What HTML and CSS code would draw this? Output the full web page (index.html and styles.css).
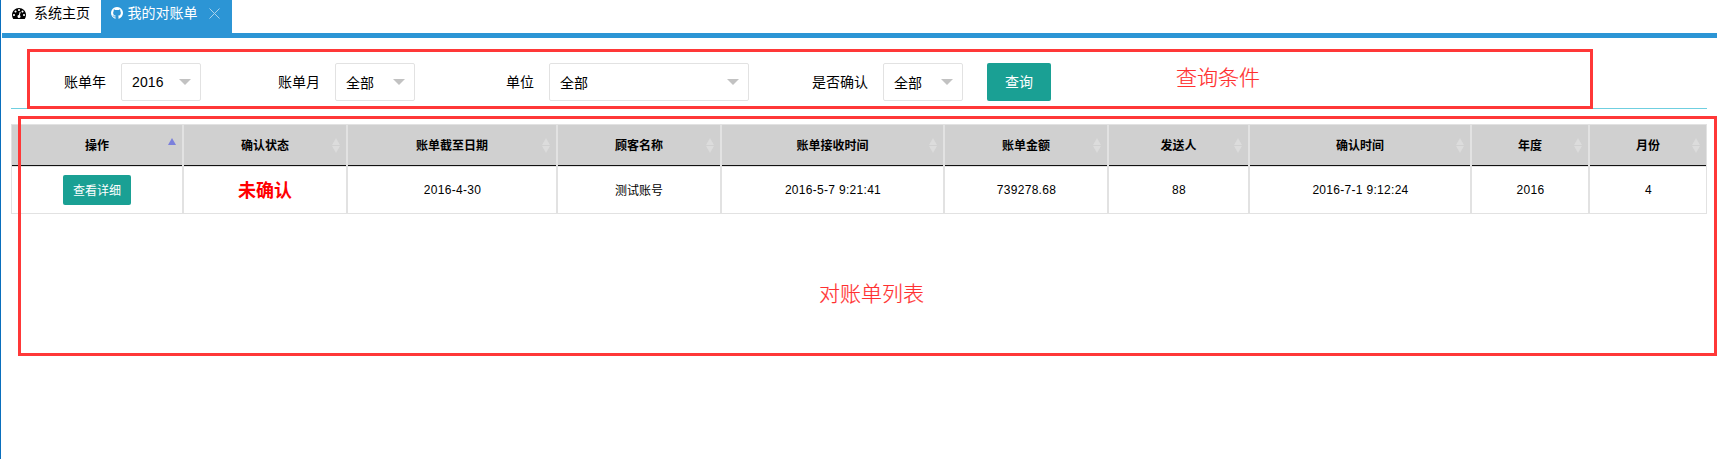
FILE: index.html
```html
<!DOCTYPE html>
<html lang="zh-CN">
<head>
<meta charset="utf-8">
<title>我的对账单</title>
<link rel="stylesheet" href="styles.css">
</head>
<body>
<div class="page">
  <nav class="tabs">
    <div class="tab">
      <svg class="icon-gauge" viewBox="0 256 1792 1408"><path fill="currentColor" d="M384 1152q0-53-37.5-90.5t-90.5-37.5-90.5 37.5-37.5 90.5 37.5 90.5 90.5 37.5 90.5-37.5 37.5-90.5zm192-448q0-53-37.5-90.5t-90.5-37.5-90.5 37.5-37.5 90.5 37.5 90.5 90.5 37.5 90.5-37.5 37.5-90.5zm428 481l101-382q6-26-7.5-48.5t-38.5-29.5-48 6.5-30 39.5l-101 382q-60 5-107 43.5t-63 98.5q-20 77 20 146t117 89 146-20 89-117q16-60-6-117t-72-91zm660-33q0-53-37.5-90.5t-90.5-37.5-90.5 37.5-37.5 90.5 37.5 90.5 90.5 37.5 90.5-37.5 37.5-90.5zm-640-640q0-53-37.5-90.5t-90.5-37.5-90.5 37.5-37.5 90.5 37.5 90.5 90.5 37.5 90.5-37.5 37.5-90.5zm448 192q0-53-37.5-90.5t-90.5-37.5-90.5 37.5-37.5 90.5 37.5 90.5 90.5 37.5 90.5-37.5 37.5-90.5zm320 448q0 261-141 483-19 29-54 29h-1402q-35 0-54-29-141-221-141-483 0-182 71-348t191-286 286-191 348-71 348 71 286 191 191 286 71 348z"/></svg>
      <span>系统主页</span>
    </div>
    <div class="tab tab-active">
      <svg class="icon-github" viewBox="128 128 1536 1536"><path fill="currentColor" d="M896 128q209 0 385.5 103t279.5 279.5 103 385.5q0 251-146.5 451.5t-378.5 277.5q-27 5-40-7t-13-30q0-3 .5-76.5t.5-134.5q0-97-52-142 57-6 102.5-18t94-39 81-66.5 53-105 20.5-150.5q0-119-79-206 37-91-8-204-28-9-81 11t-92 44l-38 24q-93-26-192-26t-192 26q-16-11-42.5-27t-83.5-38.5-85-13.5q-45 113-8 204-79 87-79 206 0 85 20.5 150t52.5 105 80.5 67 94 39 102.5 18q-39 36-49 103-21 10-45 15t-57 5-65.5-21.5-55.5-62.5q-19-32-48.5-52t-49.5-24l-20-3q-21 0-29 4.5t-5 11.5 9 14 13 12l7 5q22 10 43.5 38t31.5 51l10 23q13 38 44 61.5t67 30 69.5 7 55.5-3.5l23-4q0 38 .5 88.5t.5 54.5q0 18-13 30t-40 7q-232-77-378.5-277.5t-146.5-451.5q0-209 103-385.5t279.5-279.5 385.5-103z"/></svg>
      <span>我的对账单</span>
      <svg class="icon-close" viewBox="0 0 11 11"><path d="M.5.5l10 10M10.5.5l-10 10" stroke="currentColor" fill="none"/></svg>
    </div>
  </nav>

  <main class="content">
    <form class="filters">
      <label class="label label-first">账单年</label>
      <div class="select"><span>2016</span><i class="caret"></i></div>
      <label class="label">账单月</label>
      <div class="select"><span>全部</span><i class="caret"></i></div>
      <label class="label">单位</label>
      <div class="select select-wide"><span>全部</span><i class="caret"></i></div>
      <label class="label">是否确认</label>
      <div class="select"><span>全部</span><i class="caret"></i></div>
      <button type="button" class="btn btn-search">查询</button>
    </form>

    <div class="grid">
      <div class="th">操作<span class="sort"><i class="up up-on"></i></span></div>
      <div class="th">确认状态<span class="sort"><i class="up"></i><i class="down"></i></span></div>
      <div class="th">账单截至日期<span class="sort"><i class="up"></i><i class="down"></i></span></div>
      <div class="th">顾客名称<span class="sort"><i class="up"></i><i class="down"></i></span></div>
      <div class="th">账单接收时间<span class="sort"><i class="up"></i><i class="down"></i></span></div>
      <div class="th">账单金额<span class="sort"><i class="up"></i><i class="down"></i></span></div>
      <div class="th">发送人<span class="sort"><i class="up"></i><i class="down"></i></span></div>
      <div class="th">确认时间<span class="sort"><i class="up"></i><i class="down"></i></span></div>
      <div class="th">年度<span class="sort"><i class="up"></i><i class="down"></i></span></div>
      <div class="th">月份<span class="sort"><i class="up"></i><i class="down"></i></span></div>

      <div class="td td-action"><button type="button" class="btn btn-small">查看详细</button></div>
      <div class="td td-cjk status">未确认</div>
      <div class="td">2016-4-30</div>
      <div class="td td-cjk">测试账号</div>
      <div class="td">2016-5-7 9:21:41</div>
      <div class="td">739278.68</div>
      <div class="td">88</div>
      <div class="td">2016-7-1 9:12:24</div>
      <div class="td">2016</div>
      <div class="td">4</div>
    </div>
  </main>

  <div class="mark mark-filters"><span class="mark-text">查询条件</span></div>
  <div class="mark mark-list"><span class="mark-text">对账单列表</span></div>
</div>
</body>
</html>
```
FILE: styles.css
```css
* { box-sizing: border-box; }

body {
  margin: 0;
  background: #fff;
  color: #000;
  font: 14px "Liberation Sans", "Noto Sans CJK SC", sans-serif;
}

.page {
  position: relative;
  height: 459px;
  overflow: hidden;
  border-left: 1px solid #0a6fbd;
}

.tabs {
  display: flex;
  height: 38px;
  margin-left: 1px;
  border-bottom: 5px solid #2c95d5;
}

.tab {
  display: flex;
  align-items: center;
  width: 99px;
  height: 33px;
  padding: 0 0 7px 10px;
  line-height: 20px;
  white-space: nowrap;
}

.tab-active {
  width: 131px;
  background: #2c95d5;
  color: #fff;
}

.icon-gauge { width: 14px; height: 11px; margin-right: 8px; }
.icon-github { width: 12px; height: 12px; margin-right: 4.5px; }
.icon-close { width: 11px; height: 11px; margin-left: 11px; color: #a9d2ec; }

.content { padding: 25px 10px 0; }

.filters {
  display: flex;
  height: 46px;
  border-bottom: 1px solid #6fcfe0;
}

.label {
  width: 134px;
  padding-right: 15px;
  line-height: 38px;
  text-align: right;
}

.label-first { width: 110px; }

.select {
  display: flex;
  align-items: center;
  justify-content: space-between;
  width: 80px;
  height: 38px;
  padding: 0 9px 0 10px;
  border: 1px solid #e2e2e2;
  border-radius: 2px;
  letter-spacing: .1px;
}

.select-wide { width: 200px; }

.caret {
  border: 6px solid transparent;
  border-top-color: #c2c2c2;
  border-bottom: 0;
}

.btn {
  padding: 0 0 2px;
  border: 0;
  border-radius: 2px;
  background: #1aa094;
  color: #fff;
  font: inherit;
}

.btn-search { width: 64px; height: 38px; margin-left: 24px; }
.btn-small { width: 68px; height: 30px; letter-spacing: 0; }

.grid {
  display: grid;
  grid-template-columns: 172px 164px 210px 164px 223px 164px 141px 222px 118px 118px;
  grid-template-rows: 42px 48px;
  margin-top: 15px;
  font-size: 12px;
}

.th, .td {
  display: flex;
  align-items: center;
  justify-content: center;
  border: 1px solid #e2e2e2;
}

.th {
  position: relative;
  padding-bottom: 3px;
  border-bottom: 0;
  background: linear-gradient(#111, #111) bottom / 100% 1px no-repeat #d0d0d0;
  font-weight: bold;
}

.td {
  padding-left: 1px;
  letter-spacing: .3px;
}

.td-action { padding-left: 0; }

.td-cjk {
  padding: 0 0 2px;
  letter-spacing: 0;
}

.status {
  color: #f00;
  font-size: 18px;
  font-weight: bold;
}

.sort {
  position: absolute;
  top: 13px;
  right: 6px;
  display: grid;
  gap: 1px;
}

.up, .down { border: 4px solid transparent; }
.up { border-top: 0; border-bottom: 7px solid #dcdcdc; }
.down { border-bottom: 0; border-top: 7px solid #dcdcdc; }
.up-on { border-bottom-color: #7b80dc; }

/* Red callouts laid over the page */
.mark {
  position: absolute;
  border: 3px solid #ff3838;
  color: #ff3030;
  font-size: 21px;
  font-weight: 300;
  line-height: 30px;
}

.mark-text {
  position: absolute;
  white-space: nowrap;
  font-family: "Noto Sans CJK SC Light", "Noto Sans CJK SC", sans-serif;
  -webkit-text-stroke: .2px #ff3030;
}

.mark-filters { left: 26px; top: 49px; width: 1566px; height: 60px; }
.mark-filters .mark-text { left: 1146px; top: 9px; }
.mark-list { left: 17px; top: 116px; width: 1699px; height: 240px; }
.mark-list .mark-text { left: 798px; top: 158px; }
```
